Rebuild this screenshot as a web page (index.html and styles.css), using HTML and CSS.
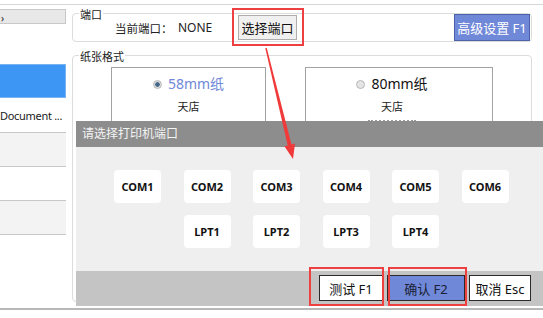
FILE: index.html
```html
<!DOCTYPE html>
<html lang="zh-CN">
<head>
    <meta charset="UTF-8">
    <meta name="viewport" content="width=device-width, initial-scale=1.0">
    <title>打印机设置</title>
    <link rel="stylesheet" href="styles.css">
</head>
<body>

<div class="app">
    <aside class="sidebar">
        <div class="side-item side-top">›</div>
        <div class="side-item side-selected"></div>
        <div class="side-item side-doc">Document ...</div>
        <div class="side-item side-row side-alt"></div>
        <div class="side-item side-row"></div>
        <div class="side-item side-row side-alt"></div>
    </aside>

    <main class="content">
        <div class="group group-port">
            <span class="group-title">端口</span>
            <span class="port-label">当前端口：</span>
            <span class="port-value">NONE</span>
            <button class="btn-choose">选择端口</button>
            <button class="btn-advanced">高级设置 F1</button>
        </div>

        <div class="group group-paper">
            <span class="group-title">纸张格式</span>
            <div class="paper-card">
                <div class="paper-option checked"><span class="radio"></span>58mm纸</div>
                <div class="paper-shop">天店</div>
            </div>
            <div class="paper-card paper-wide">
                <div class="paper-option"><span class="radio"></span>80mm纸</div>
                <div class="paper-shop">天店</div>
                <div class="paper-dots"></div>
            </div>
        </div>
    </main>
</div>

<!-- 端口选择弹窗 -->
<div class="port-dialog">
    <div class="dialog-title">请选择打印机端口</div>
    <div class="dialog-body">
        <button class="port-btn">COM1</button>
        <button class="port-btn">COM2</button>
        <button class="port-btn">COM3</button>
        <button class="port-btn">COM4</button>
        <button class="port-btn">COM5</button>
        <button class="port-btn">COM6</button>
        <button class="port-btn lpt-first">LPT1</button>
        <button class="port-btn">LPT2</button>
        <button class="port-btn">LPT3</button>
        <button class="port-btn">LPT4</button>
    </div>
    <div class="dialog-footer">
        <button class="foot-btn btn-test">测试 F1</button>
        <button class="foot-btn btn-ok">确认 F2</button>
        <button class="foot-btn btn-cancel">取消 Esc</button>
    </div>
</div>

<!-- 标注 -->
<div class="mark mark-choose"></div>
<div class="mark mark-test"></div>
<div class="mark mark-ok"></div>
<svg class="arrow" width="543" height="318" viewBox="0 0 543 318">
    <polygon points="265.3,48.2 266.7,47.8 291.5,144.5 295,143.6 293,159 284.4,146.3 287.7,145.5" fill="#f03a3a"/>
</svg>

</body>
</html>
```

FILE: styles.css
```css
body {
    font-family: "Noto Sans", "Noto Sans CJK SC", sans-serif;
    color: #222;
    background: white;
    margin: 0;
    width: 543px;
    height: 318px;
    overflow: hidden;
    position: relative;
}

button {
    font-family: inherit;
    padding: 0;
    white-space: nowrap;
    cursor: pointer;
}

.app {
    display: flex;
    margin-top: 4px;
    height: 303px;
    border-top: 1px solid #d6d6d6;
    border-bottom: 2px solid #b8b8b8;
}

/* 左侧列表 */
.sidebar {
    width: 66px;
    padding-top: 4px;
}

.side-item {
    box-sizing: border-box;
    font-size: 11px;
    white-space: nowrap;
    overflow: hidden;
}

.side-top {
    height: 15px;
    margin-bottom: 40px;
    background: #e8e8e8;
    border: 1px solid #c8c8c8;
    border-left: none;
    font-size: 10px;
    line-height: 16px;
    padding-left: 1px;
}

.side-selected {
    height: 34px;
    background: #3d96f4;
    border: 1px solid #79b4f2;
    border-left: none;
}

.side-doc {
    height: 35px;
    line-height: 36px;
    letter-spacing: -0.3px;
    border-bottom: 1px solid #c8c8c8;
}

.side-row {
    height: 34px;
    border-bottom: 1px solid #c8c8c8;
}

.side-alt {
    background: #f3f3f3;
}

/* 右侧设置 */
.content {
    margin-left: 6px;
    width: 460px;
}

.group {
    position: relative;
    box-sizing: border-box;
    border: 1px solid #dcdcdc;
    border-radius: 4px;
}

.group-title {
    position: absolute;
    top: -6px;
    left: 6px;
    padding: 0 1px;
    background: white;
    font-size: 11px;
    line-height: 14px;
}

.group-port {
    display: flex;
    align-items: center;
    margin-top: 8px;
    height: 29px;
}

.port-label {
    margin-left: 42px;
    width: 63px;
    font-size: 11.5px;
}

.port-value {
    width: 60px;
    font-size: 12px;
}

.btn-choose {
    width: 59px;
    height: 25px;
    background: #f0f0f0;
    border: 1px solid #adadad;
    font-size: 13px;
    color: #111;
}

.btn-advanced {
    margin-left: auto;
    margin-right: 1px;
    width: 76px;
    height: 27px;
    background: #6f88d8;
    border: 1px solid #4d62a6;
    color: white;
    font-size: 13px;
}

.group-paper {
    display: flex;
    gap: 39px;
    margin-top: 13px;
    height: 247px;
    padding: 11px 0 0 38px;
}

.paper-card {
    box-sizing: border-box;
    width: 155px;
    height: 80px;
    border: 1px solid #a3a3a3;
    text-align: center;
    padding-top: 7px;
}

.paper-wide {
    width: 188px;
    padding-right: 14px;
}

.paper-option {
    font-size: 14px;
    line-height: 18px;
    color: #111;
}

.paper-option.checked {
    color: #6f88d8;
}

.radio {
    display: inline-block;
    box-sizing: border-box;
    width: 9px;
    height: 9px;
    margin-right: 6px;
    border: 1px solid #b8b8b8;
    border-radius: 50%;
    background: #e4e4e4;
    vertical-align: 0;
}

.checked .radio {
    background: radial-gradient(circle, #46698a 0, #46698a 2px, #dcdcdc 2.5px);
}

.paper-shop {
    margin-top: 7px;
    font-size: 11px;
    line-height: 14px;
}

.paper-dots {
    width: 48px;
    margin: 6px auto 0;
    border-top: 2px dotted #999;
}

/* 弹窗 */
.port-dialog {
    position: absolute;
    left: 76px;
    top: 121px;
    width: 467px;
    height: 185px;
}

.dialog-title {
    height: 26px;
    line-height: 26px;
    padding-left: 6px;
    background: #8d8d8d;
    color: #f4f4f4;
    font-size: 12px;
}

.dialog-body {
    box-sizing: border-box;
    height: 124px;
    background: #efefef;
    padding: 23px 0 0 38px;
    display: grid;
    grid-template-columns: repeat(6, 47px);
    grid-auto-rows: 33px;
    column-gap: 22.5px;
    row-gap: 12px;
    align-content: start;
}

.port-btn {
    background: white;
    border: none;
    border-radius: 4px;
    font-size: 11px;
    font-weight: bold;
    color: #111;
}

.lpt-first {
    grid-column: 2;
}

.dialog-footer {
    box-sizing: border-box;
    height: 35px;
    background: #c4c4c4;
    display: flex;
    justify-content: flex-end;
    gap: 4px;
    padding: 4px 12px 0 0;
}

.foot-btn {
    height: 26px;
    background: white;
    border: 1px solid #2a2a2a;
    font-size: 13px;
    color: #111;
}

.btn-test {
    width: 64px;
}

.btn-ok {
    width: 78px;
    background: #6f88d8;
    color: #1c1f36;
}

.btn-cancel {
    width: 62px;
}

/* 红色标注 */
.mark {
    position: absolute;
    box-sizing: border-box;
    border: 2px solid #ee4040;
}

.mark-choose {
    left: 232px;
    top: 8px;
    width: 72px;
    height: 38px;
}

.mark-test {
    left: 309px;
    top: 267px;
    width: 75px;
    height: 39px;
}

.mark-ok {
    left: 388px;
    top: 267px;
    width: 79px;
    height: 39px;
}

.arrow {
    position: absolute;
    left: 0;
    top: 0;
    pointer-events: none;
}
```
